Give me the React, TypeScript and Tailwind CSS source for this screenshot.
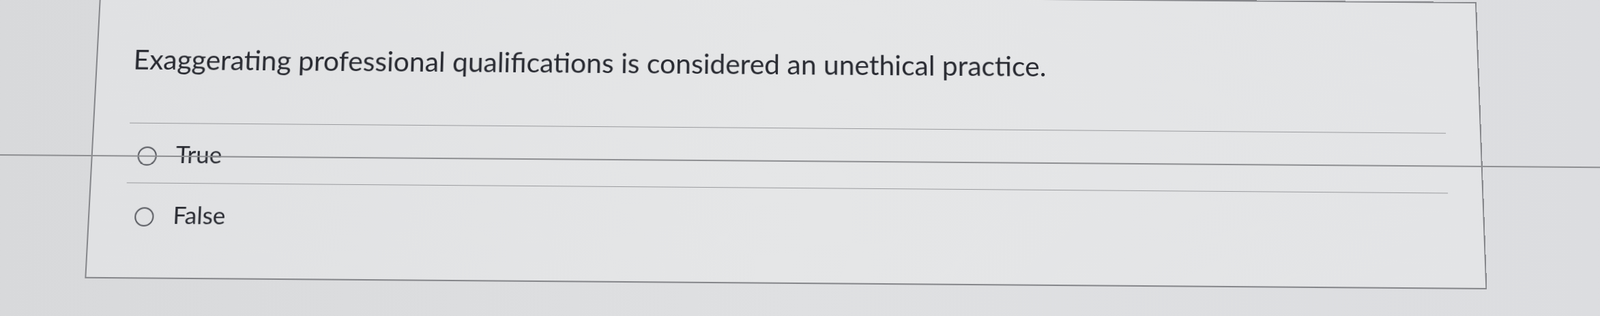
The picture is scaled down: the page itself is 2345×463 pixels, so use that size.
import React from "react";

function Radio() {
  return (
    <span className="mt-[14px] block h-[28px] w-[28px] shrink-0 rounded-full border-[2.5px] border-[#55575d]" />
  );
}

function Answer({ label, pt }: { label: string; pt: string }) {
  return (
    <div className={`flex items-start border-t-[1.5px] border-[#9a9b9e] pl-[14px] ${pt}`}>
      <Radio />
      <span className="ml-[28px] text-[35px] leading-[48px] text-[#282a31]">{label}</span>
    </div>
  );
}

export default function App() {
  return (
    <div
      className="relative h-[463px] w-[2345px] overflow-hidden bg-linear-to-r from-[#d8d9db] via-[#dfe0e2] to-[#dcdde0]"
      style={{ fontFamily: "Lato, 'Open Sans', sans-serif" }}
    >
      <div className="relative h-full w-full origin-[1153px_231px] [transform:perspective(2000px)_rotateX(5deg)_rotate(0.45deg)]">
        <div className="ml-[134px] mt-[-8px] h-[423px] w-[2038px] border-2 border-[#85868a] bg-linear-to-r from-[#e0e1e3] via-[#e5e6e7] to-[#e3e4e6] pl-[52px] pr-[50px] pt-[75px]">
          <div className="ml-[1px] whitespace-nowrap text-[41px] leading-[48px] text-[#282a31]">
            Exaggerating professional qualifications is considered an unethical practice.
          </div>
          <div className="mt-[70px]">
            <div className="pb-[19px]">
              <Answer label="True" pt="pt-[20px]" />
            </div>
            <Answer label="False" pt="pt-[20.5px]" />
          </div>
        </div>
        <div className="absolute left-[-40px] right-[-40px] top-[243px] h-[1.5px] bg-[#8e8f92]" />
      </div>
    </div>
  );
}
